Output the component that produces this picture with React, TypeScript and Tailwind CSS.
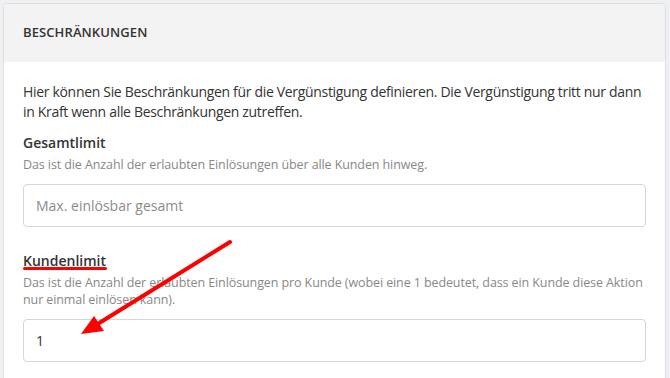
const Field = ({
  label,
  hint,
  placeholder,
  value,
  marked,
}: {
  label: string;
  hint: React.ReactNode;
  placeholder?: string;
  value?: string;
  marked?: boolean;
}) => (
  <div className="flex flex-col">
    <div className="relative self-start">
      <h3 className="text-[14px] font-semibold leading-[20px] text-[#333]">{label}</h3>
      {marked && (
        <span className="absolute left-0 right-[-1px] top-[16px] h-[3px] rounded-full bg-[#f00]" />
      )}
    </div>
    <p className="mt-[3px] whitespace-nowrap text-[12.5px] leading-[17.5px] tracking-[-0.1px] text-[#888]">
      {hint}
    </p>
    <div className="mt-[10px] flex h-[43px] items-center rounded-[4px] border border-[#d6d6d6] bg-white px-[12px] text-[14px]">
      {value ? (
        <span className="text-[#333]">{value}</span>
      ) : (
        <span className="text-[#8c8c8c]">{placeholder}</span>
      )}
    </div>
  </div>
);

export default function App() {
  return (
    <div
      className="relative h-[378px] w-[670px] overflow-hidden bg-[#eef0f3] pl-[3px] pt-[3px]"
      style={{ fontFamily: '"Open Sans", "Noto Sans", sans-serif' }}
    >
      <div className="w-[663px] overflow-hidden rounded-[4px] border border-[#dedfe1] bg-white">
        <div className="flex h-[58px] items-center bg-[#f3f3f3] px-[19px]">
          <h2 className="text-[13px] font-semibold uppercase tracking-[0.1px] text-[#333]">
            Beschränkungen
          </h2>
        </div>
        <div className="flex flex-col px-[19px] pt-[20px]">
          <p className="whitespace-nowrap text-[14px] leading-[20px] tracking-[-0.32px] text-[#333]">
            Hier können Sie Beschränkungen für die Vergünstigung definieren. Die Vergünstigung
            tritt nur dann
            <br />
            in Kraft wenn alle Beschränkungen zutreffen.
          </p>
          <div className="mt-[11px]">
            <Field
              label="Gesamtlimit"
              hint="Das ist die Anzahl der erlaubten Einlösungen über alle Kunden hinweg."
              placeholder="Max. einlösbar gesamt"
            />
          </div>
          <div className="mt-[24px]">
            <Field
              label="Kundenlimit"
              hint={
                <>
                  Das ist die Anzahl der erlaubten Einlösungen pro Kunde (wobei eine 1 bedeutet, dass
                  ein Kunde diese Aktion
                  <br />
                  nur einmal einlösen kann).
                </>
              }
              value="1"
              marked
            />
          </div>
          <div className="h-[40px]" />
        </div>
      </div>

      {/* annotation arrow */}
      <svg className="pointer-events-none absolute left-0 top-0" width="670" height="378">
        <line x1="230" y1="242" x2="96" y2="325" stroke="#f00" strokeWidth="4" strokeLinecap="round" />
        <polygon points="81,334 94,316 104,331" fill="#f00" />
      </svg>
    </div>
  );
}
